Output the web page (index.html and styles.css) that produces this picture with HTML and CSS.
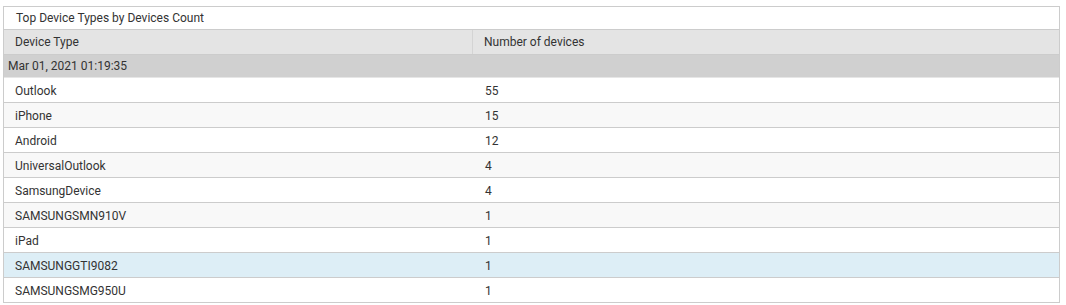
FILE: index.html
```html
<!DOCTYPE html>
<html>
<head>
<meta charset="utf-8">
<link rel="stylesheet" href="styles.css">
</head>
<body>
<div class="panel">
  <div class="title">Top Device Types by Devices Count</div>
  <div class="row head">
    <div class="cell c1">Device Type</div>
    <div class="cell c2">Number of devices</div>
  </div>
  <div class="group">Mar 01, 2021 01:19:35</div>
  <div class="row"><div class="cell c1">Outlook</div><div class="cell c2">55</div></div>
  <div class="row alt"><div class="cell c1">iPhone</div><div class="cell c2">15</div></div>
  <div class="row"><div class="cell c1">Android</div><div class="cell c2">12</div></div>
  <div class="row alt"><div class="cell c1">UniversalOutlook</div><div class="cell c2">4</div></div>
  <div class="row"><div class="cell c1">SamsungDevice</div><div class="cell c2">4</div></div>
  <div class="row alt"><div class="cell c1">SAMSUNGSMN910V</div><div class="cell c2">1</div></div>
  <div class="row"><div class="cell c1">iPad</div><div class="cell c2">1</div></div>
  <div class="row sel"><div class="cell c1">SAMSUNGGTI9082</div><div class="cell c2">1</div></div>
  <div class="row"><div class="cell c1">SAMSUNGSMG950U</div><div class="cell c2">1</div></div>
</div>
</body>
</html>
```
FILE: styles.css
```css
html, body {
  margin: 0;
  padding: 0;
  background: #fff;
}
body {
  padding: 6px 6px 0 3px;
  font-family: Roboto, "Liberation Sans", sans-serif;
  font-size: 12px;
  color: #333;
  overflow: hidden;
}
.panel {
  width: 1055px;
  border: 1px solid #ccc;
  border-bottom: none;
}
.title {
  height: 22px;
  line-height: 22px;
  padding-left: 12px;
  border-bottom: 1px solid #ccc;
  background: #fff;
}
.row {
  display: flex;
  height: 23px;
  padding-top: 1px;
  line-height: 24px;
  border-bottom: 1px solid #ccc;
  background: #fff;
}
.row.alt { background: #f8f8f8; }
.row.sel { background: #ddeef6; }
.row.head {
  height: 24px;
  padding-top: 0;
  background: #e4e4e4;
  border-bottom: 1px solid #ccc;
}
.cell {
  padding-left: 11px;
  box-sizing: border-box;
}
.c1 { width: 470px; }
.head .c1 {
  width: 469px;
  border-right: 1px solid #d4d4d4;
}
.c2 { flex: 1; }
.group {
  height: 22px;
  line-height: 22px;
  padding-left: 4px;
  background: #d0d0d0;
  border-bottom: 1px solid #e6e6e6;
}
```
